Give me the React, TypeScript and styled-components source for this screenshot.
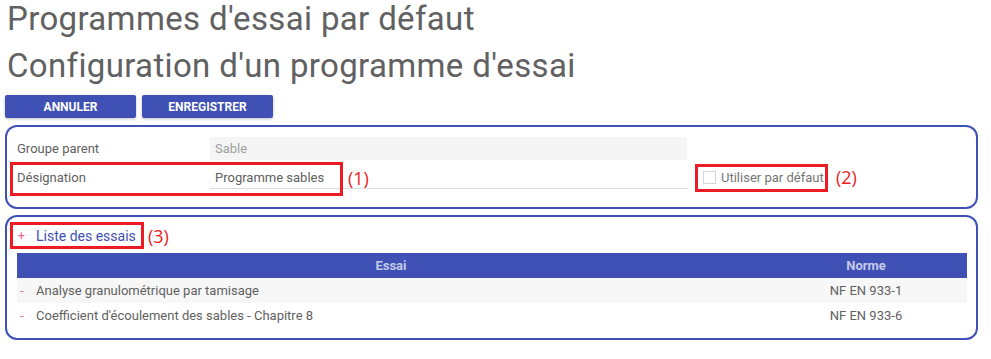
import styled, { createGlobalStyle } from "styled-components";

const GlobalStyle = createGlobalStyle`
  body {
    margin: 0;
    background: #ffffff;
    font-family: Roboto, "Liberation Sans", sans-serif;
    color: #616161;
  }
`;

interface essai {
    nom: string,
    norme: string,
}

const essais: essai[] = [
    { nom: "Analyse granulométrique par tamisage", norme: "NF EN 933-1" },
    { nom: "Coefficient d'écoulement des sables - Chapitre 8", norme: "NF EN 933-6" },
];

const App = () => {
    return (
        <StyledPage>
            <GlobalStyle />
            <StyledTitle>Programmes d'essai par défaut</StyledTitle>
            <StyledTitle className="second">Configuration d'un programme d'essai</StyledTitle>

            <StyledToolbar>
                <StyledButton>Annuler</StyledButton>
                <StyledButton>Enregistrer</StyledButton>
            </StyledToolbar>

            <StyledPanel className="form-panel">
                <StyledFormRow>
                    <StyledLabel>Groupe parent</StyledLabel>
                    <StyledField $disabled>Sable</StyledField>
                </StyledFormRow>
                <StyledFormRow>
                    <StyledLabel>Désignation</StyledLabel>
                    <StyledField>Programme sables</StyledField>
                    <StyledCheckLabel>
                        <StyledCheckbox />
                        Utiliser par défaut
                        <StyledFrame className="frame-2" />
                        <StyledMark className="mark-2">(2)</StyledMark>
                    </StyledCheckLabel>
                    <StyledFrame className="frame-1" />
                    <StyledMark className="mark-1">(1)</StyledMark>
                </StyledFormRow>
            </StyledPanel>

            <StyledPanel className="list-panel">
                <StyledListTitle>
                    <span className="plus">+</span>
                    Liste des essais
                    <StyledFrame className="frame-3" />
                    <StyledMark className="mark-3">(3)</StyledMark>
                </StyledListTitle>
                <StyledTable>
                    <thead>
                        <tr>
                            <StyledTh>Essai</StyledTh>
                            <StyledTh className="norme">Norme</StyledTh>
                        </tr>
                    </thead>
                    <tbody>
                        {essais.map((e, i) => (
                            <StyledTr key={i} $odd={i % 2 === 0}>
                                <StyledTd>
                                    <span className="minus">-</span>
                                    {e.nom}
                                </StyledTd>
                                <StyledTd className="norme">{e.norme}</StyledTd>
                            </StyledTr>
                        ))}
                    </tbody>
                </StyledTable>
            </StyledPanel>
        </StyledPage>
    )
}

const StyledPage = styled.div`
    padding: 0 13px 0 5px;
`;

const StyledTitle = styled.h1`
    margin: 0 0 9px 0;
    padding-left: 2px;
    font-size: 33px;
    line-height: 38px;
    letter-spacing: 0.35px;
    font-weight: 400;
    color: #616161;

    &.second {
        margin-bottom: 10px;
    }
`;

const StyledToolbar = styled.div`
    display: flex;
    gap: 6px;
    margin-bottom: 7px;
`;

const StyledButton = styled.button`
    width: 131px;
    height: 23px;
    border: none;
    border-radius: 2px;
    background-color: #3f51b5;
    color: #ffffff;
    font-family: Roboto, "Liberation Sans", sans-serif;
    font-size: 12px;
    font-weight: 700;
    text-transform: uppercase;
    box-shadow: 0 1px 3px rgba(0, 0, 0, 0.25);
    cursor: pointer;
`;

const StyledPanel = styled.div`
    border: 2px solid #3f51b5;
    border-radius: 12px;

    &.form-panel {
        padding: 10px 10px 18px 10px;
        display: flex;
        flex-direction: column;
        gap: 6px;
        margin-bottom: 6px;
    }

    &.list-panel {
        padding: 5px 9px 10px 10px;
    }
`;

const StyledFormRow = styled.div`
    position: relative;
    display: flex;
    align-items: center;
    font-size: 13px;
`;

const StyledLabel = styled.div`
    width: 193px;
    color: #616161;
`;

const StyledField = styled.div<{ $disabled?: boolean }>`
    width: 477px;
    height: 23px;
    box-sizing: border-box;
    padding: 0 5px;
    display: flex;
    align-items: center;
    background-color: ${p => p.$disabled ? "#f5f5f5" : "transparent"};
    color: ${p => p.$disabled ? "#9e9e9e" : "#616161"};
    border-bottom: ${p => p.$disabled ? "none" : "1px solid #dcdcdc"};
`;

const StyledCheckLabel = styled.label`
    position: relative;
    display: flex;
    align-items: center;
    margin-left: 16px;
    color: #757575;
    font-size: 13px;
`;

const StyledCheckbox = styled.span`
    display: inline-block;
    width: 11px;
    height: 11px;
    border: 1px solid #d6d6d6;
    margin-right: 5px;
`;

const StyledFrame = styled.span`
    position: absolute;
    border: 3px solid #ed1c24;
    box-sizing: border-box;
    pointer-events: none;

    &.frame-1 {
        left: -7px;
        top: -4px;
        width: 333px;
        height: 34px;
    }

    &.frame-2 {
        left: -8px;
        top: -6px;
        width: 133px;
        height: 28px;
    }

    &.frame-3 {
        left: -7px;
        top: 0;
        width: 134px;
        height: 27px;
    }
`;

const StyledMark = styled.span`
    position: absolute;
    color: #ed1c24;
    font-family: "Open Sans", "Liberation Sans", sans-serif;
    font-size: 18px;
    line-height: 20px;

    &.mark-1 {
        left: 331px;
        top: 2px;
    }

    &.mark-2 {
        left: 133px;
        top: -3px;
    }

    &.mark-3 {
        left: 131px;
        top: 4px;
    }
`;

const StyledListTitle = styled.div`
    position: relative;
    display: flex;
    align-items: center;
    height: 28px;
    margin-bottom: 3px;
    font-size: 14px;
    color: #3f51b5;

    .plus {
        color: #f06292;
        font-size: 12px;
        width: 18px;
        padding-left: 1px;
    }
`;

const StyledTable = styled.table`
    width: 100%;
    border-collapse: collapse;
    font-size: 13px;
`;

const StyledTh = styled.th`
    height: 25px;
    padding: 0;
    background-color: #3f51b5;
    color: #c5cae9;
    font-weight: 700;
    text-align: center;

    &.norme {
        width: 202px;
    }
`;

const StyledTr = styled.tr<{ $odd: boolean }>`
    background-color: ${p => p.$odd ? "#f7f7f7" : "#ffffff"};
`;

const StyledTd = styled.td`
    height: 25px;
    padding: 0;
    color: #616161;

    .minus {
        display: inline-block;
        width: 19px;
        padding-left: 3px;
        box-sizing: border-box;
        color: #f06292;
    }

    &.norme {
        text-align: center;
    }
`;

export default App
